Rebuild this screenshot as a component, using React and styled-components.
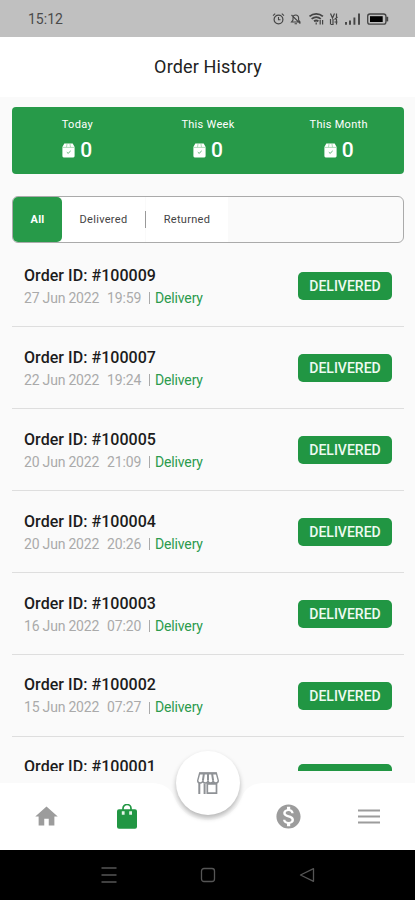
import React, { useState } from "react";
import styled, { createGlobalStyle } from "styled-components";
import { MdHome, MdMonetizationOn } from "react-icons/md";

const stats = [
  { label: "Today", count: 0 },
  { label: "This Week", count: 0 },
  { label: "This Month", count: 0 },
];

const filters = ["All", "Delivered", "Returned"];

const orders = [
  { id: "100009", date: "27 Jun 2022", time: "19:59" },
  { id: "100007", date: "22 Jun 2022", time: "19:24" },
  { id: "100005", date: "20 Jun 2022", time: "21:09" },
  { id: "100004", date: "20 Jun 2022", time: "20:26" },
  { id: "100003", date: "16 Jun 2022", time: "07:20" },
  { id: "100002", date: "15 Jun 2022", time: "07:27" },
  { id: "100001" },
];

const StatusIcons = () => (
  <svg width="118" height="16" viewBox="0 0 118 16" fill="none" stroke="#444">
    {/* alarm */}
    <circle cx="6.5" cy="8.5" r="4.4" strokeWidth="1.2" />
    <path d="M6.5 6v2.8h2M1 4.6l2.2-2M12 4.6l-2.2-2" strokeWidth="1.1" />
    {/* muted bell */}
    <path
      d="M19.5 11h8.5l-1.4-2V6.8a2.8 2.8 0 0 0-5.6 0V9zM22.6 12.8h2.4M19.5 4l8.8 8.6"
      strokeWidth="1.1"
    />
    {/* wifi */}
    <path
      d="M37.5 5.4c4-3.4 9.4-3.4 13.4 0M39.6 7.9c2.8-2.2 6.4-2.2 9.2 0M42 10.3c1.4-1 3-1 4.4 0"
      strokeWidth="1.8"
    />
    <path d="M44.2 11.6v2M48.2 9v4.6M50.6 9v4.6" strokeWidth="1.2" />
    {/* data rate */}
    <path
      d="M58.5 2.5l2 4.5 2-4.5M58.5 8v5.5M61 8v5.5h-2M64.5 2.5v11M62.5 8.5l3-2.5M62.5 11h3"
      strokeWidth="1.2"
    />
    {/* signal */}
    <path d="M74 11v2.8M78 9.5v4.3M82.4 6.5v7.3M87 2.5v11.3" strokeWidth="1.9" />
    {/* battery */}
    <rect x="95.7" y="3" width="18.2" height="10.2" rx="2.2" strokeWidth="1.3" />
    <rect x="98" y="5.2" width="12.7" height="5.8" fill="#000" stroke="none" />
    <path d="M115.2 5.8v4.6" strokeWidth="2" />
  </svg>
);

const PackageIcon = () => (
  <svg width="13" height="15" viewBox="0 0 13 15">
    <path
      d="M2.3.4h8.4l1.9 3.5v9.2a1.3 1.3 0 0 1-1.3 1.3H1.7A1.3 1.3 0 0 1 .4 13.1V3.9z"
      fill="#fff"
    />
    <path d="M.4 4.4h12.2M5.1.5l-.6 3.7M7.9.5l.6 3.7" stroke="#8ccc9b" strokeWidth=".7" />
    <path d="M4.8 9.2l1.3 1.2 2.6-2.5" fill="none" stroke="#5cb377" />
  </svg>
);

const BagIcon = () => (
  <svg width="20" height="26" viewBox="0 0 20 26">
    <path
      d="M6 7V4.5a4 4 0 0 1 8 0V7"
      fill="none"
      stroke="#219643"
      strokeWidth="1.7"
    />
    <rect y="5.2" width="20" height="19.6" rx="2" fill="#219643" />
    <path d="M4.8 7.2h2.8v3.6H4.8zM12.2 7.2H15v3.6h-2.8z" fill="#e4f3e8" />
  </svg>
);

const StoreIcon = () => (
  <svg width="24" height="24" viewBox="0 0 24 24" fill="none" stroke="#8f9296">
    <path
      d="M3.7 2h16.6l2 7.5c0 1.5-1 2.5-2.5 2.5s-2.6-1-2.6-2.5c0 1.5-1.1 2.5-2.6 2.5S12 11 12 9.5c0 1.5-1.1 2.5-2.6 2.5s-2.6-1-2.6-2.5C6.8 11 5.7 12 4.2 12S1.7 11 1.7 9.5z"
      strokeWidth="1.4"
    />
    <path d="M3.5 2.6h17M7.9 2.6l-1 7M12 2.6v7M16.1 2.6l1 7" strokeWidth="2" />
    <path d="M3.3 12v11M8.6 12.5V23" strokeWidth="2" />
    <path d="M11.3 12.8h9.2v9.4h-9.2z" strokeWidth="1.7" />
  </svg>
);

const MenuIcon = () => (
  <svg width="22" height="16" viewBox="0 0 22 16">
    <path d="M0 1.5h22M0 7.5h22M0 13.5h22" stroke="#9c9c9c" strokeWidth="2" />
  </svg>
);

const App = () => {
  const [active, setActive] = useState("All");

  return (
    <Phone>
      <GlobalStyle />
      <StatusBar>
        <Clock>15:12</Clock>
        <StatusIcons />
      </StatusBar>
      <Header>Order History</Header>
      <Content>
        <StatsCard>
          {stats.map((s) => (
            <Stat key={s.label}>
              <StatLabel>{s.label}</StatLabel>
              <StatValue>
                <PackageIcon />
                {s.count}
              </StatValue>
            </Stat>
          ))}
        </StatsCard>
        <FilterBar>
          {filters.map((f, i) => (
            <React.Fragment key={f}>
              {i > 1 && <FilterDivider />}
              <FilterButton
                $active={active === f}
                $width={[49, 83, 82][i]}
                onClick={() => setActive(f)}
              >
                {f}
              </FilterButton>
            </React.Fragment>
          ))}
        </FilterBar>
        <OrderList>
          {orders.map((o) => (
            <OrderRow key={o.id}>
              <OrderInfo>
                <OrderTitle>Order ID: #{o.id}</OrderTitle>
                {o.date && (
                  <OrderMeta>
                    <OrderDate>{o.date}</OrderDate>
                    <Time>{o.time}</Time>
                    <Bar />
                    <OrderType>Delivery</OrderType>
                  </OrderMeta>
                )}
              </OrderInfo>
              <Status>{o.date && "DELIVERED"}</Status>
            </OrderRow>
          ))}
        </OrderList>
      </Content>
      <BottomNav>
        <NavShape width="415" height="67" viewBox="0 0 415 67">
          <path
            d="M0 0H151C163 0 171 5 174 14C180 29 192 37 208 37S236 29 242 14C245 5 253 0 265 0H415V67H0z"
            fill="#fff"
          />
        </NavShape>
        <NavItem>
          <MdHome size={27} color="#9c9c9c" />
        </NavItem>
        <NavItem>
          <BagIcon />
        </NavItem>
        <NavItem />
        <NavItem>
          <MdMonetizationOn size={29} color="#9c9c9c" />
        </NavItem>
        <NavItem>
          <MenuIcon />
        </NavItem>
        <StoreButton>
          <StoreIcon />
        </StoreButton>
      </BottomNav>
      <SystemBar>
        <svg width="16" height="18" viewBox="0 0 16 18" stroke="#555" strokeWidth="1.3">
          <path d="M.5 2h15M.5 9h15M.5 16h15" />
        </svg>
        <svg width="16" height="18" viewBox="0 0 16 18" fill="none" stroke="#555">
          <rect x="1.5" y="2.5" width="13" height="13" rx="2.5" strokeWidth="1.3" />
        </svg>
        <svg width="16" height="18" viewBox="0 0 16 18" fill="none" stroke="#555">
          <path d="M14.5 2.7v12.6L1.5 9z" strokeWidth="1.3" strokeLinejoin="round" />
        </svg>
      </SystemBar>
    </Phone>
  );
};

export default App;

const GlobalStyle = createGlobalStyle`
  body {
    margin: 0;
    font-family: Roboto, "Liberation Sans", sans-serif;
  }

  * {
    box-sizing: border-box;
  }

  svg {
    display: block;
    flex-shrink: 0;
  }
`;

const Phone = styled.div`
  width: 415px;
  height: 900px;
  display: flex;
  flex-direction: column;
  background: #fafafa;
  overflow: hidden;
`;

const StatusBar = styled.div`
  height: 37px;
  flex-shrink: 0;
  padding: 1px 25px 0 28px;
  display: flex;
  align-items: center;
  justify-content: space-between;
  background: #c0c0c0;
`;

const Clock = styled.div`
  font-size: 14px;
  color: #4a4a4a;
`;

const Header = styled.div`
  height: 60px;
  flex-shrink: 0;
  display: flex;
  align-items: center;
  justify-content: center;
  padding: 0 0 2px 1px;
  background: #fff;
  font-size: 18px;
  letter-spacing: 0.15px;
  color: #222;
`;

const Content = styled.div`
  height: 674px;
  flex-shrink: 0;
  padding: 10px 11px 0 12px;
  overflow: hidden;
`;

const StatsCard = styled.div`
  height: 67px;
  display: flex;
  border-radius: 4px;
  background: #279a49;
  color: #fff;
`;

const Stat = styled.div`
  flex: 1;
  padding-top: 10px;
  display: flex;
  flex-direction: column;
  align-items: center;
`;

const StatLabel = styled.div`
  font-size: 11px;
  line-height: 16px;
  letter-spacing: 0.3px;
`;

const StatValue = styled.div`
  margin-top: 5px;
  display: flex;
  align-items: center;
  gap: 5px;
  font-size: 21px;
  font-weight: 500;
  line-height: 24px;
`;

const FilterBar = styled.div`
  height: 47px;
  margin-top: 22px;
  display: flex;
  align-items: center;
  border: 1px solid #aaa;
  border-radius: 6px;
`;

const FilterButton = styled.button`
  width: ${(props) => props.$width}px;
  height: 45px;
  padding: 0;
  border: 0;
  border-radius: ${(props) => (props.$active ? "5px" : "0")};
  background: ${(props) => (props.$active ? "#279a49" : "#fff")};
  color: ${(props) => (props.$active ? "#fff" : "#444")};
  font-family: inherit;
  font-size: 11px;
  letter-spacing: 0.3px;
  font-weight: ${(props) => (props.$active ? 700 : 400)};
  cursor: pointer;
`;

const FilterDivider = styled.div`
  width: 1px;
  height: 17px;
  background: #999;
`;

const OrderList = styled.div`
  padding-top: 2.4px;
`;

const OrderRow = styled.div`
  height: 81.9px;
  padding: 18px 12px 0;
  display: flex;
  align-items: flex-start;
  justify-content: space-between;
  border-bottom: 1px solid #dedede;
`;

const OrderInfo = styled.div`
  flex: 1;
  padding-top: 0.6px;
`;

const OrderTitle = styled.div`
  font-size: 16px;
  font-weight: 500;
  line-height: 23px;
  letter-spacing: 0.05px;
  color: #1c1c1c;
`;

const OrderMeta = styled.div`
  display: flex;
  align-items: center;
  font-size: 14px;
  line-height: 23px;
  color: #aaa;
`;

const OrderDate = styled.span`
  width: 75px;
  letter-spacing: -0.2px;
  white-space: nowrap;
`;

const Time = styled.span`
  width: 34px;
  margin-left: 8px;
  letter-spacing: -0.1px;
`;

const Bar = styled.span`
  width: 1px;
  height: 12px;
  margin: 0 5px 0 8px;
  background: #aaa;
`;

const OrderType = styled.span`
  letter-spacing: -0.15px;
  color: #2c9b4d;
`;

const Status = styled.div`
  width: 94px;
  height: 28px;
  margin-top: 9px;
  display: flex;
  align-items: center;
  justify-content: center;
  border-radius: 5px;
  background: #219643;
  font-size: 14px;
  font-weight: 500;
  color: #eefaf1;
`;

const BottomNav = styled.div`
  position: relative;
  height: 67px;
  flex-shrink: 0;
  margin-top: 12px;
  padding: 0 6px;
  display: flex;
`;

const NavShape = styled.svg`
  position: absolute;
  left: 0;
  top: 0;
`;

const NavItem = styled.div`
  position: relative;
  flex: 1;
  display: flex;
  align-items: center;
  justify-content: center;
`;

const StoreButton = styled.div`
  position: absolute;
  left: 176px;
  top: -32px;
  width: 64px;
  height: 64px;
  display: flex;
  align-items: center;
  justify-content: center;
  border-radius: 50%;
  background: #fff;
  box-shadow: 0 3px 5px rgba(0, 0, 0, 0.28);
`;

const SystemBar = styled.div`
  flex: 1;
  display: flex;
  align-items: center;
  justify-content: center;
  gap: 83px;
  background: #000;
`;
